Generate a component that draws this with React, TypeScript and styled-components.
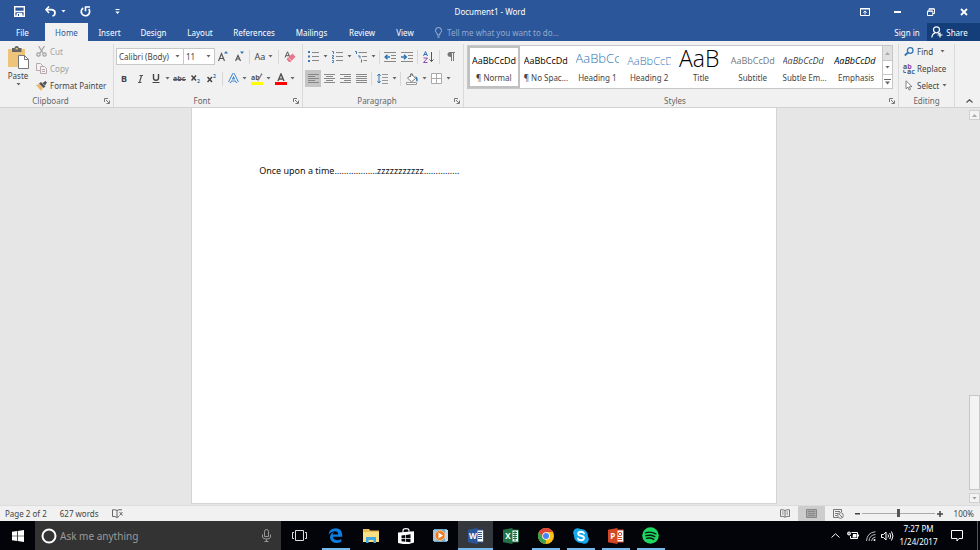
import React from "react";
import styled, { createGlobalStyle, css } from "styled-components";

const GlobalStyle = createGlobalStyle`
  * { box-sizing: border-box; }
  body { margin: 0; overflow: hidden; background: #e6e6e6; }
  body, button, input, select { font-family: "Noto Sans", "Open Sans", sans-serif; font-size: 8px; }
  button, input, select { margin: 0; padding: 0; border: 0; background: none; color: inherit; outline: none; }
  svg { display: block; flex: none; }
`;

const BLUE = "#2b579a";

const Screen = styled.div`
  height: 100vh;
  display: flex;
  flex-direction: column;
  color: #444;
  line-height: 12px;
`;

/* Title bar */
const TitleBar = styled.header`
  height: 23px;
  flex: none;
  display: grid;
  grid-template-columns: 1fr auto 1fr;
  align-items: center;
  background: ${BLUE};
  color: #fff;
`;
const QuickAccess = styled.div`
  display: flex;
  align-items: center;
  padding-left: 9px;
`;
const BarButton = styled.button<{ $w: number }>`
  width: ${(p) => p.$w}px;
  height: 22px;
  display: flex;
  align-items: center;
  justify-content: center;
  gap: 5px;
`;
const DocTitle = styled.h1`
  margin: 0;
  font-size: 8px;
  font-weight: 400;
`;
const WindowButtons = styled.div`
  display: flex;
  justify-content: flex-end;
`;

/* Tabs */
const TabRow = styled.nav`
  height: 18px;
  flex: none;
  display: flex;
  align-items: stretch;
  background: ${BLUE};
  color: #fff;
`;
const Tab = styled.button<{ $w: number; $active?: boolean }>`
  width: ${(p) => p.$w}px;
  ${(p) =>
    p.$active &&
    css`
      background: #f1f1f1;
      color: ${BLUE};
    `}
`;
const TellMe = styled.label`
  flex: 1;
  display: flex;
  align-items: center;
  gap: 5px;
  padding-left: 10px;
  color: #a9bcd9;
`;
const TellInput = styled.input`
  width: 160px;
  &::placeholder { color: #92a9cf; opacity: 1; }
`;
const SignIn = styled.button`
  width: 40px;
`;
const Share = styled.button`
  width: 53px;
  display: flex;
  align-items: center;
  justify-content: center;
  gap: 3px;
  background: #133e7a;
  padding-right: 8px;
`;

/* Ribbon */
const Ribbon = styled.div`
  height: 67px;
  flex: none;
  display: flex;
  background: #f1f1f1;
  border-bottom: 1px solid #d2d2d2;
  padding: 3px 0 0;
`;
const Group = styled.section<{ $w?: number }>`
  ${(p) => (p.$w ? `width: ${p.$w}px; flex: none;` : "flex: 1; min-width: 0;")}
  display: flex;
  flex-direction: column;
  border-right: 1px solid #dadada;
`;
const GroupBody = styled.div`
  flex: 1;
  display: flex;
  min-height: 0;
`;
const GroupFoot = styled.footer`
  height: 12px;
  display: flex;
  align-items: center;
  text-align: center;
  color: #666;
`;
const Launcher = styled.button`
  width: 12px;
  height: 12px;
  display: flex;
  align-items: center;
  justify-content: center;
`;
const FootLabel = styled.span`
  flex: 1;
`;
const PasteButton = styled.button`
  width: 36px;
  display: flex;
  flex-direction: column;
  align-items: center;
  padding-top: 2px;
  gap: 1px;
  line-height: 12px;
`;
const Stack = styled.div`
  display: flex;
  flex-direction: column;
  align-items: flex-start;
  line-height: 14px;
`;
const TextButton = styled.button<{ $disabled?: boolean }>`
  height: 17px;
  display: flex;
  align-items: center;
  gap: 3px;
  padding-bottom: 2px;
  white-space: nowrap;
  color: ${(p) => (p.$disabled ? "#a0a0a0" : "#444")};
`;
const IconSlot = styled.span`
  width: 11px;
  display: flex;
  justify-content: center;
`;
const Rows = styled.div`
  display: flex;
  flex-direction: column;
  padding: 4px 0 0 2px;
  gap: 5px;
`;
const Row = styled.div`
  height: 17px;
  display: flex;
  align-items: center;
`;
const Tool = styled.button<{ $w?: number; $active?: boolean }>`
  width: ${(p) => p.$w ?? 16}px;
  height: 17px;
  flex: none;
  display: flex;
  align-items: center;
  justify-content: center;
  gap: 3px;
  font-size: 9px;
  background: ${(p) => (p.$active ? "#c5c5c5" : "none")};
`;
const Divider = styled.span`
  width: 1px;
  height: 14px;
  margin: 0 2px;
  background: #d8d8d8;
`;
const Combo = styled.span<{ $w: number }>`
  width: ${(p) => p.$w}px;
  height: 17px;
  display: flex;
  align-items: center;
  background: #fff;
  border: 1px solid #c8c8c8;
  padding-right: 3px;
  & + & { margin-left: -1px; }
`;
const ComboSelect = styled.select`
  flex: 1;
  min-width: 0;
  appearance: none;
  padding-left: 2px;
  color: #444;
`;

/* Styles gallery */
const Gallery = styled.div`
  flex: 1;
  min-width: 0;
  height: 44px;
  margin: 1px 5px 0 3px;
  display: flex;
  background: #fff;
  border: 1px solid #c6c6c6;
`;
const StyleList = styled.div`
  flex: 1;
  min-width: 0;
  display: grid;
  grid-template-columns: repeat(8, minmax(0, 1fr));
`;
const StyleCard = styled.button<{ $active?: boolean }>`
  display: flex;
  flex-direction: column;
  padding: 0 2px;
  overflow: hidden;
  border: 2px solid ${(p) => (p.$active ? "#c0c0c0" : "transparent")};
  white-space: nowrap;
`;
const Sample = styled.span<{ $size: number; $color: string; $italic?: boolean; $light?: boolean }>`
  width: 100%;
  height: 23px;
  overflow: hidden;
  text-align: left;
  line-height: ${(p) => (p.$size > 12 ? 21 : 26)}px;
  font-family: "Open Sans", "Noto Sans", sans-serif;
  font-size: ${(p) => p.$size}px;
  font-weight: ${(p) => (p.$light ? 300 : 400)};
  font-style: ${(p) => (p.$italic ? "italic" : "normal")};
  color: ${(p) => p.$color};
`;
const StyleName = styled.span`
  width: 100%;
  text-align: center;
  line-height: 14px;
`;
const GalleryNav = styled.div`
  width: 10px;
  display: grid;
  grid-template-rows: 1fr 1fr 1fr;
  border-left: 1px solid #c6c6c6;
`;
const NavButton = styled.button<{ $dim?: boolean }>`
  display: flex;
  align-items: center;
  justify-content: center;
  background: ${(p) => (p.$dim ? "#e1e1e1" : "#fff")};
  & + & { border-top: 1px solid #c6c6c6; }
`;
const Collapse = styled.button`
  width: 25px;
  display: flex;
  align-items: flex-end;
  justify-content: center;
  padding: 0 0 4px 4px;
`;

/* Document */
const Workspace = styled.main`
  flex: 1;
  min-height: 0;
  display: flex;
  background: #e6e6e6;
`;
const Canvas = styled.div`
  flex: 1;
  display: flex;
  justify-content: center;
  padding-bottom: 1px;
`;
const Page = styled.article`
  width: 60.5%;
  background: #fff;
  border: 1px solid #d4d4d4;
  border-top: 0;
  padding: 56px 67px;
`;
const Paragraph = styled.p`
  margin: 0;
  font-size: 9px;
  line-height: 14px;
  color: #111;
`;
const ScrollBar = styled.div`
  width: 12px;
  display: flex;
  flex-direction: column;
  gap: 3px;
  padding: 2px 0 2px 1px;
`;
const ScrollButton = styled.button`
  height: 10px;
  display: flex;
  align-items: center;
  justify-content: center;
  background: #f3f3f3;
  border: 1px solid #d0d0d0;
`;
const ScrollTrack = styled.div`
  flex: 1;
  display: flex;
  flex-direction: column;
  justify-content: flex-end;
`;
const ScrollThumb = styled.div`
  height: 26%;
  background: #f3f3f3;
  border: 1px solid #c6c6c6;
`;

/* Status bar */
const StatusBar = styled.footer`
  height: 16px;
  flex: none;
  display: flex;
  align-items: center;
  background: #f1f1f1;
  border-top: 1px solid #dcdcdc;
  padding: 0 6px 0 5px;
`;
const StatusText = styled.span`
  margin-right: 13px;
`;
const Spacer = styled.span`
  flex: 1;
`;
const ViewButton = styled.button<{ $active?: boolean }>`
  width: 27px;
  height: 15px;
  display: flex;
  align-items: center;
  justify-content: center;
  background: ${(p) => (p.$active ? "#cdcdcd" : "none")};
`;
const ZoomStep = styled.button`
  width: 10px;
  height: 14px;
  display: flex;
  align-items: center;
  justify-content: center;
`;
const ZoomRange = styled.input`
  width: 73px;
  height: 10px;
  appearance: none;
  &::-webkit-slider-runnable-track { height: 1px; background: #aaa; }
  &::-webkit-slider-thumb { appearance: none; width: 3px; height: 8px; margin-top: -4px; background: #555; }
`;
const ZoomValue = styled.span`
  width: 29px;
  text-align: right;
`;

/* Taskbar */
const Taskbar = styled.footer`
  height: 29px;
  flex: none;
  display: flex;
  background: #02040a;
  color: #fff;
`;
const TaskButton = styled.button<{ $w?: number; $state?: "open" | "active" }>`
  width: ${(p) => p.$w ?? 35}px;
  display: flex;
  align-items: center;
  justify-content: center;
  background-color: ${(p) => (p.$state === "active" ? "#34383d" : "transparent")};
  ${(p) =>
    p.$state &&
    css`
      background-image: linear-gradient(#76b9ed, #76b9ed);
      background-repeat: no-repeat;
      background-position: center bottom;
      background-size: ${p.$state === "active" ? "100%" : "28px"} 2px;
    `}
`;
const Search = styled.label`
  width: 246px;
  display: flex;
  align-items: center;
  gap: 3px;
  padding: 0 10px 0 6px;
  background: #333;
`;
const SearchInput = styled.input`
  flex: 1;
  min-width: 0;
  font-size: 10px;
  &::placeholder { color: #9a9a9a; opacity: 1; }
`;
const Clock = styled.time`
  width: 47px;
  text-align: center;
  line-height: 13px;
  padding-top: 1px;
`;
const DesktopEdge = styled.button`
  width: 3px;
  margin-left: 5px;
  border-left: 1px solid #555;
`;

const Arrow = ({ color = "#666" }: { color?: string }) => (
  <svg width="5" height="3" viewBox="0 0 5 3"><path d="M.5 0h4L2.5 2.6z" fill={color} /></svg>
);
const ArrowButton = ({ label }: { label: string }) => (
  <Tool $w={7} aria-label={label}><Arrow /></Tool>
);
const UpArrow = ({ color = "#aaa" }: { color?: string }) => (
  <svg width="5" height="3" viewBox="0 0 5 3"><path d="M0 3h5L2.5 0z" fill={color} /></svg>
);
const Lines = ({ rows }: { rows: [number, number][] }) => (
  <svg width="11" height="9" viewBox="0 0 11 9" stroke="#888">
    {rows.map(([a, b], i) => <path key={i} d={`M${a} ${i * 2 + 0.5}H${b}`} />)}
  </svg>
);
const Foot = ({ children, launcher = true }: { children: React.ReactNode; launcher?: boolean }) => (
  <GroupFoot>
    <FootLabel>{children}</FootLabel>
    {launcher && (
      <Launcher aria-label={`${children} settings`}>
        <svg width="6" height="6" viewBox="0 0 6 6" fill="none" stroke="#777"><path d="M.5 4V.5H4M2 2l3 3M5.5 2.5v3h-3" /></svg>
      </Launcher>
    )}
  </GroupFoot>
);

const SCRIPT_TEXT = { fontFamily: "Open Sans", fontWeight: 700 } as const;

const ClipboardGroup = () => (
  <Group $w={114}>
    <GroupBody>
      <PasteButton>
        <svg width="22" height="23" viewBox="0 0 22 23">
          <path d="M1 3h17v18H1z" fill="#edc47a" />
          <path d="M5 2h2.500q0-2 2.200-2t2.200 2H14.500v4H5z" fill="#666" />
          <path d="M8.600 2h2.200v1.500H8.600z" fill="#edc47a" />
          <path d="M11.500 9.500h6l4 4v9h-10z" fill="#fff" stroke="#777" />
          <path d="M17.500 9.500v4h4" fill="none" stroke="#777" />
        </svg>
        Paste
        <Arrow />
      </PasteButton>
      <Stack>
        <TextButton $disabled>
          <IconSlot><svg width="11" height="11" viewBox="0 0 11 11" fill="none" stroke="#a0a0a0" strokeWidth="1.200"><path d="M2.500 0l4.500 7M8.500 0L4 7" /><circle cx="2.500" cy="8.500" r="1.700" /><circle cx="8.500" cy="8.500" r="1.700" /></svg></IconSlot>
          Cut
        </TextButton>
        <TextButton $disabled>
          <IconSlot><svg width="11" height="11" viewBox="0 0 11 11" fill="#f6f2f4" stroke="#b5a9b0"><path d="M.5.5h4l2 2v5h-6z" /><path d="M4.500 3.500h4l2 2v5h-6zM6 6.500h3M6 8.500h3" /></svg></IconSlot>
          Copy
        </TextButton>
        <TextButton>
          <IconSlot><svg width="11" height="10" viewBox="0 0 11 10"><path d="M0 4l3-1 4 4-2 3z" fill="#edb768" /><path d="M3 2.500l2-1.500 4.500 4.500-2 1.500zM6.500 2L9.500 0 11 1.500 9 4.500z" fill="#555" /></svg></IconSlot>
          Format Painter
        </TextButton>
      </Stack>
    </GroupBody>
    <Foot>Clipboard</Foot>
  </Group>
);

const FontGroup = () => (
  <Group $w={189}>
    <GroupBody>
      <Rows>
        <Row>
          <Combo $w={68}>
            <ComboSelect aria-label="Font" defaultValue="Calibri (Body)"><option>Calibri (Body)</option></ComboSelect>
            <Arrow />
          </Combo>
          <Combo $w={32}>
            <ComboSelect aria-label="Font size" defaultValue="11"><option>11</option></ComboSelect>
            <Arrow />
          </Combo>
          <Tool aria-label="Grow font">
            <svg width="10" height="11" viewBox="0 0 10 11"><path d="M.5 10L3.500 2.500 6.500 10M1.500 7.500h4" fill="none" stroke="#555" strokeWidth="1.200" /><path d="M6 2.500h4L8 0z" fill="#2e75b6" /></svg>
          </Tool>
          <Tool aria-label="Shrink font">
            <svg width="9" height="11" viewBox="0 0 9 11"><path d="M.5 10L3 4.500 5.500 10M1.500 8h3" fill="none" stroke="#555" strokeWidth="1.200" /><path d="M5 .5h4L7 3z" fill="#2e75b6" /></svg>
          </Tool>
          <Divider />
          <Tool $w={24} aria-label="Change case">Aa<Arrow /></Tool>
          <Divider />
          <Tool $w={18} aria-label="Clear formatting">
            <svg width="12" height="12" viewBox="0 0 12 12"><path d="M1 6.500L3.500.8 6 6.500M2 4.700h3" fill="none" stroke="#555" /><path d="M2.500 8L8.500 2.500l3 3.200L6.500 11H4.800z" fill="#e8798d" /><path d="M4.300 6.500l3.200 3.300" stroke="#f7c5cd" /></svg>
          </Tool>
        </Row>
        <Row>
          <Tool aria-label="Bold"><b>B</b></Tool>
          <Tool aria-label="Italic"><svg width="7" height="8" viewBox="0 0 7 8" fill="none" stroke="#555"><path d="M2.500.5H6M1 7.500h3.500M4.500.5l-2 7" strokeWidth="1.200" /></svg></Tool>
          <Tool aria-label="Underline"><svg width="8" height="9" viewBox="0 0 8 9" fill="none" stroke="#444"><path d="M1.500 0v4q0 2.300 2.500 2.300t2.500-2.300V0" strokeWidth="1.400" /><path d="M.5 8.500h7" /></svg></Tool>
          <ArrowButton label="Underline styles" />
          <Tool $w={17} aria-label="Strikethrough">
            <svg width="13" height="9" viewBox="0 0 13 9"><text x="0" y="7" fontSize="7" fill="#555" style={SCRIPT_TEXT}>abc</text><path d="M0 5.500h13" stroke="#555" /></svg>
          </Tool>
          <Tool aria-label="Subscript">
            <svg width="10" height="9" viewBox="0 0 10 9"><path d="M.5 1.500l4.500 5M5 1.500l-4.500 5" stroke="#444" strokeWidth="1.500" /><text x="6" y="9" fontSize="5" fill="#2e75b6" style={SCRIPT_TEXT}>2</text></svg>
          </Tool>
          <Tool aria-label="Superscript">
            <svg width="10" height="10" viewBox="0 0 10 10"><path d="M.5 3l4.500 5M5 3L.5 8" stroke="#444" strokeWidth="1.500" /><text x="6" y="4" fontSize="5" fill="#2e75b6" style={SCRIPT_TEXT}>2</text></svg>
          </Tool>
          <Divider />
          <Tool aria-label="Text effects">
            <svg width="11" height="11" viewBox="0 0 11 11" fill="none"><path d="M1.500 9.500L5.500 1.500l4 8M3 7h5" stroke="#3f84c8" strokeWidth="3" strokeLinejoin="round" /><path d="M1.500 9.500L5.500 1.500l4 8M3 7h5" stroke="#fff" strokeWidth="1.200" /></svg>
          </Tool>
          <ArrowButton label="Text effect options" />
          <Tool $w={17} aria-label="Highlight">
            <svg width="12" height="12" viewBox="0 0 12 12"><text x="0" y="7" fontSize="7" fill="#555" style={SCRIPT_TEXT}>ab</text><path d="M11.500 1L7.500 7.500l-1 .8.300-1.500L10.500 0z" fill="#777" /><path d="M0 9h12v3H0z" fill="#ff0" /></svg>
          </Tool>
          <ArrowButton label="Highlight colors" />
          <Tool $w={17} aria-label="Font color">
            <svg width="12" height="12" viewBox="0 0 12 12"><path d="M3 8L6 1l3 7M4 6h4" fill="none" stroke="#555" strokeWidth="1.500" /><path d="M0 9h12v3H0z" fill="#f00" /></svg>
          </Tool>
          <ArrowButton label="Font colors" />
        </Row>
      </Rows>
    </GroupBody>
    <Foot>Font</Foot>
  </Group>
);

const ParagraphGroup = () => (
  <Group $w={161}>
    <GroupBody>
      <Rows>
        <Row>
          <Tool $w={17} aria-label="Bullets">
            <svg width="11" height="11" viewBox="0 0 11 11"><path d="M0 0h2v2H0zM0 4.500h2v2H0zM0 9h2v2H0z" fill="#3877b5" /><path d="M4 1.500h7M4 5.500h7M4 9.500h7" stroke="#888" /></svg>
          </Tool>
          <ArrowButton label="Bullet library" />
          <Tool $w={17} aria-label="Numbering">
            <svg width="11" height="12" viewBox="0 0 11 12"><path d="M0 .5h1.500V3M0 4.500h1.500v1.500H.5v1.500H2M0 9.500h1.500v2H0" fill="none" stroke="#3877b5" strokeWidth=".9" /><path d="M4 1.500h7M4 5.500h7M4 9.500h7" stroke="#888" /></svg>
          </Tool>
          <ArrowButton label="Number formats" />
          <Tool $w={17} aria-label="Multilevel list">
            <svg width="13" height="12" viewBox="0 0 13 12"><path d="M0 .5h1.500V3M3 5h2v2.500M6.500 8.500v3" fill="none" stroke="#3877b5" /><path d="M3.500 1.500H12M7 5.500h5M8.500 9.500H12" stroke="#888" /></svg>
          </Tool>
          <ArrowButton label="List levels" />
          <Divider />
          <Tool $w={17} aria-label="Decrease indent">
            <svg width="13" height="10" viewBox="0 0 13 10"><path d="M0 .5h12M7 3.500h5M7 6.500h5M0 9.500h12" stroke="#888" /><path d="M6 5H1.500M3.500 2.800L1.200 5l2.300 2.200" fill="none" stroke="#2e75b6" strokeWidth="1.500" /></svg>
          </Tool>
          <Tool $w={16} aria-label="Increase indent">
            <svg width="13" height="10" viewBox="0 0 13 10"><path d="M0 .5h12M7 3.500h5M7 6.500h5M0 9.500h12" stroke="#888" /><path d="M0 5h5M3 2.800L5.300 5 3 7.200" fill="none" stroke="#2e75b6" strokeWidth="1.500" /></svg>
          </Tool>
          <Divider />
          <Tool $w={17} aria-label="Sort">
            <svg width="11" height="12" viewBox="0 0 11 12" fill="none"><path d="M.5 5L2.500.5l2 4.500M1 3.500h3" stroke="#2e75b6" /><path d="M.5 7h4l-4 4.500h4" stroke="#8a4bab" /><path d="M8.500 1v9.500M6.500 8.500l2 2 2-2" stroke="#555" /></svg>
          </Tool>
          <Divider />
          <Tool $w={18} aria-label="Show marks">
            <svg width="8" height="9" viewBox="0 0 8 9"><path d="M3 0h5v1H7v8H6V1H5v8H4V5Q.5 5 .5 2.500T3 0z" fill="#777" /></svg>
          </Tool>
        </Row>
        <Row>
          <Tool $active aria-label="Align left"><Lines rows={[[0, 11], [0, 7], [0, 11], [0, 7], [0, 11]]} /></Tool>
          <Tool aria-label="Center"><Lines rows={[[0, 11], [2, 9], [0, 11], [2, 9], [0, 11]]} /></Tool>
          <Tool aria-label="Align right"><Lines rows={[[0, 11], [4, 11], [0, 11], [4, 11], [0, 11]]} /></Tool>
          <Tool aria-label="Justify"><Lines rows={[[0, 11], [0, 11], [0, 11], [0, 11], [0, 11]]} /></Tool>
          <Divider />
          <Tool $w={17} aria-label="Line spacing">
            <svg width="11" height="11" viewBox="0 0 11 11" fill="none"><path d="M2 1v9M.3 2.800L2 1l1.700 1.800M.3 8.200L2 10l1.700-1.800" stroke="#2e75b6" /><path d="M5 1.500h6M5 4.500h6M5 7.500h6M5 10.500h6" stroke="#999" /></svg>
          </Tool>
          <ArrowButton label="Line spacing options" />
          <Divider />
          <Tool $w={18} aria-label="Shading">
            <svg width="13" height="12" viewBox="0 0 13 12"><path d="M1.500 5L6 1.500 9.500 5.500 5.500 8.800z" fill="#fff" stroke="#777" /><path d="M4.500 4V1q1-1 2 0v2" fill="none" stroke="#777" /><path d="M9 3.500q3.500 0 2.500 5-2-.5-1.500-3z" fill="#3877b5" /><path d="M.5 9.500h10v2H.5z" fill="#fff" stroke="#999" /></svg>
          </Tool>
          <ArrowButton label="Shading colors" />
          <Tool $w={17} aria-label="Borders">
            <svg width="11" height="11" viewBox="0 0 11 11" fill="#fff" stroke="#aaa"><path d="M1 .5h9.500v10H.5V.5zM5.500 0v11M0 5.500h11" /></svg>
          </Tool>
          <ArrowButton label="Border options" />
        </Row>
      </Rows>
    </GroupBody>
    <Foot>Paragraph</Foot>
  </Group>
);

const STYLES = [
  { name: "¶ Normal", text: "AaBbCcDd", size: 9, color: "#000", active: true },
  { name: "¶ No Spac...", text: "AaBbCcDd", size: 9, color: "#000" },
  { name: "Heading 1", text: "AaBbCc", size: 13, color: "#2e74b5", light: true },
  { name: "Heading 2", text: "AaBbCcD", size: 11, color: "#2e74b5", light: true },
  { name: "Title", text: "AaB", size: 23, color: "#000", light: true },
  { name: "Subtitle", text: "AaBbCcDd", size: 9, color: "#777" },
  { name: "Subtle Em...", text: "AaBbCcDd", size: 9, color: "#404040", italic: true },
  { name: "Emphasis", text: "AaBbCcDd", size: 9, color: "#000", italic: true },
];

const StylesGroup = () => (
  <Group>
    <GroupBody>
      <Gallery>
        <StyleList>
          {STYLES.map((s) => (
            <StyleCard key={s.name} $active={s.active}>
              <Sample $size={s.size} $color={s.color} $italic={s.italic} $light={s.light}>{s.text}</Sample>
              <StyleName>{s.name}</StyleName>
            </StyleCard>
          ))}
        </StyleList>
        <GalleryNav>
          <NavButton $dim aria-label="Previous styles"><UpArrow /></NavButton>
          <NavButton aria-label="Next styles"><Arrow /></NavButton>
          <NavButton aria-label="More styles">
            <svg width="7" height="6" viewBox="0 0 7 6"><path d="M0 .5h7" stroke="#666" /><path d="M1 2.500h5L3.500 5.500z" fill="#666" /></svg>
          </NavButton>
        </GalleryNav>
      </Gallery>
    </GroupBody>
    <Foot>Styles</Foot>
  </Group>
);

const EditStack = styled(Stack)`
  padding-left: 4px;
`;
const ArrowSlot = styled.span`
  padding-left: 4px;
`;

const EditingGroup = () => (
  <Group $w={56}>
    <GroupBody>
      <EditStack>
        <TextButton>
          <IconSlot><svg width="10" height="9" viewBox="0 0 10 9" fill="none" stroke="#2e75b6"><circle cx="6.200" cy="3.500" r="2.800" strokeWidth="1.300" /><path d="M4 5.500L.8 8.500" strokeWidth="1.800" /></svg></IconSlot>
          Find
          <ArrowSlot><Arrow /></ArrowSlot>
        </TextButton>
        <TextButton>
          <IconSlot>
            <svg width="12" height="12" viewBox="0 0 12 12"><text x="0" y="6" fontSize="7" fill="#555" style={SCRIPT_TEXT}>a<tspan fill="#8a4bab">b</tspan></text><text x="4" y="11" fontSize="7" fill="#555" style={SCRIPT_TEXT}>a<tspan fill="#2e75b6">c</tspan></text><path d="M.8 7v2.500H3" fill="none" stroke="#2e75b6" /></svg>
          </IconSlot>
          Replace
        </TextButton>
        <TextButton>
          <IconSlot><svg width="8" height="11" viewBox="0 0 8 11"><path d="M1 .8v8l2-1.700 1.200 3 1.300-.6L4.300 6.700H7z" fill="#fff" stroke="#777" strokeWidth=".9" /></svg></IconSlot>
          Select
          <Arrow />
        </TextButton>
      </EditStack>
    </GroupBody>
    <Foot launcher={false}>Editing</Foot>
  </Group>
);

const TABS: [string, number][] = [
  ["File", 45], ["Home", 43], ["Insert", 43], ["Design", 45], ["Layout", 48], ["References", 60],
  ["Mailings", 55], ["Review", 46], ["View", 40],
];

const OfficeIcon = ({ color, letter, sheet }: { color: string; letter: string; sheet: React.ReactNode }) => (
  <svg width="16" height="16" viewBox="0 0 16 16">
    <path d="M8 2h7.500v12H8z" fill="#fff" stroke={color} />
    {sheet}
    <path d="M0 1.800L9.500 0v16L0 14.200z" fill={color} />
    <text x="4.800" y="11" textAnchor="middle" fontSize="8" fill="#fff" style={SCRIPT_TEXT}>{letter}</text>
  </svg>
);

export default function App() {
  return (
    <Screen>
      <GlobalStyle />
      <TitleBar>
        <QuickAccess>
          <BarButton $w={20} aria-label="Save">
            <svg width="11" height="11" viewBox="0 0 11 11" fill="none" stroke="#fff"><path d="M.7.7h9.600v9.600H.7z" strokeWidth="1.400" /><path d="M1 5.500h9" strokeWidth="1.500" /><path d="M3 7.500h5V10H3z" fill="#fff" /><path d="M4.500 8v2" stroke={BLUE} /></svg>
          </BarButton>
          <BarButton $w={52} aria-label="Undo">
            <svg width="11" height="11" viewBox="0 0 11 11" fill="none" stroke="#fff"><path d="M4 .5L1 3.700 4 7" strokeWidth="1.600" /><path d="M1 3.700h5.500q3.500.3 3.500 3T7.500 10" strokeWidth="1.700" /></svg>
            <Arrow color="#fff" />
          </BarButton>
          <BarButton $w={8} aria-label="Repeat">
            <svg width="11" height="11" viewBox="0 0 11 11" fill="none" stroke="#fff"><path d="M3.200 2A4.200 4.200 0 1 0 8.800 3" strokeWidth="1.700" /><path d="M5.500 5.300V1H10" strokeWidth="1.600" /></svg>
          </BarButton>
          <BarButton $w={56} aria-label="Customize toolbar">
            <svg width="5" height="6" viewBox="0 0 5 6"><path d="M.5.5h4" stroke="#fff" /><path d="M.3 2.500h4.400L2.500 5z" fill="#fff" /></svg>
          </BarButton>
        </QuickAccess>
        <DocTitle>Document1 - Word</DocTitle>
        <WindowButtons>
          <BarButton $w={33} aria-label="Ribbon display options">
            <svg width="10" height="8" viewBox="0 0 10 8" fill="none" stroke="#fff"><path d="M.5.5h9v7h-9zM0 1h10" /><path d="M5 6.500V3M3.300 4.500L5 3l1.700 1.500" /></svg>
          </BarButton>
          <BarButton $w={33} aria-label="Minimize"><svg width="7" height="2" viewBox="0 0 7 2"><path d="M0 0h7v2H0z" fill="#fff" /></svg></BarButton>
          <BarButton $w={33} aria-label="Restore"><svg width="8" height="8" viewBox="0 0 8 8" fill="none" stroke="#fff"><path d="M2 2V.8h5.500V5.500H6M2 1h5" /><path d="M.5 3.200h5.300v4.300H.5zM.5 3h5" /></svg></BarButton>
          <BarButton $w={33} aria-label="Close"><svg width="8" height="8" viewBox="0 0 8 8" stroke="#fff" strokeWidth="1.800"><path d="M1 1l6 6M7 1L1 7" /></svg></BarButton>
        </WindowButtons>
      </TitleBar>

      <TabRow>
        {TABS.map(([name, w]) => (
          <Tab key={name} $w={w} $active={name === "Home"}>{name}</Tab>
        ))}
        <TellMe>
          <svg width="7" height="11" viewBox="0 0 7 11" fill="none" stroke="currentColor"><path d="M2.300 8q0-1.500-.8-2.200Q.5 4.800.5 3.500q0-3 3-3t3 3q0 1.300-1 2.300-.8.700-.8 2.200zM2.300 10h2.400" /></svg>
          <TellInput aria-label="Tell me what you want to do" placeholder="Tell me what you want to do..." />
        </TellMe>
        <SignIn>Sign in</SignIn>
        <Share>
          <svg width="12" height="12" viewBox="0 0 12 12" fill="none" stroke="#fff" strokeWidth="1.200"><circle cx="5.500" cy="3.800" r="3" /><path d="M.8 11.500q.5-4 3.500-4.700M6.800 6.800l1.500 1M9 6.500v5M6.500 9h5" /></svg>
          Share
        </Share>
      </TabRow>

      <Ribbon>
        <ClipboardGroup />
        <FontGroup />
        <ParagraphGroup />
        <StylesGroup />
        <EditingGroup />
        <Collapse aria-label="Collapse ribbon">
          <svg width="7" height="4" viewBox="0 0 7 4" fill="none" stroke="#555" strokeWidth="1.300"><path d="M.5 3.500l3-2.700 3 2.700" /></svg>
        </Collapse>
      </Ribbon>

      <Workspace>
        <Canvas>
          <Page>
            <Paragraph>Once upon a time………………zzzzzzzzzzz……………</Paragraph>
          </Page>
        </Canvas>
        <ScrollBar>
          <ScrollButton aria-label="Scroll up"><UpArrow /></ScrollButton>
          <ScrollTrack><ScrollThumb /></ScrollTrack>
          <ScrollButton aria-label="Scroll down"><Arrow color="#999" /></ScrollButton>
        </ScrollBar>
      </Workspace>

      <StatusBar>
        <StatusText>Page 2 of 2</StatusText>
        <StatusText>627 words</StatusText>
        <svg width="11" height="9" viewBox="0 0 11 9" fill="none" stroke="#666"><path d="M5 1.500Q3 .3.500.8v6.700q2.500-.5 4.500 1zM5 1.500Q6.500.3 10 .8M5 8.500q1-1 2-1M7.500 3l3 3.500M10.500 3l-3 3.500" /></svg>
        <Spacer />
        <ViewButton aria-label="Read mode">
          <svg width="10" height="9" viewBox="0 0 10 9" fill="none" stroke="#777"><path d="M5 1.500Q3 .3.500.8v6.700q2.500-.5 4.500.7 2-1.200 4.500-.7V.8Q7 .3 5 1.500zV8M2 3h1.500M2 5h1.500M6.500 3H8M6.500 5H8" /></svg>
        </ViewButton>
        <ViewButton $active aria-label="Print layout">
          <svg width="11" height="9" viewBox="0 0 11 9" fill="#aaa" stroke="#888"><path d="M.5.5h10v8H.5zM2 2.500h7M2 4.500h7M2 6.500h7" /></svg>
        </ViewButton>
        <ViewButton aria-label="Web layout">
          <svg width="11" height="10" viewBox="0 0 11 10" fill="none" stroke="#777"><path d="M5 8.500H.5v-8h8V3M2 2.500h5M2 4.500h3M2 6.500h2" /><circle cx="7.500" cy="6.500" r="2.800" /><path d="M6 5l3 3" /></svg>
        </ViewButton>
        <ZoomStep aria-label="Zoom out"><svg width="5" height="2" viewBox="0 0 5 2"><path d="M0 0h5v1.500H0z" fill="#444" /></svg></ZoomStep>
        <ZoomRange type="range" aria-label="Zoom" min="0" max="200" defaultValue="100" />
        <ZoomStep aria-label="Zoom in"><svg width="6" height="6" viewBox="0 0 6 6"><path d="M0 3h6M3 0v6" stroke="#444" strokeWidth="1.500" /></svg></ZoomStep>
        <ZoomValue>100%</ZoomValue>
      </StatusBar>

      <Taskbar>
        <TaskButton aria-label="Start">
          <svg width="12" height="12" viewBox="0 0 12 12" fill="#fff"><path d="M0 1.700l5-.7v4.700H0zM5.700.9L12 0v5.700H5.700zM0 6.300h5V11l-5-.7zM5.700 6.300H12V12l-6.300-.9z" /></svg>
        </TaskButton>
        <Search>
          <svg width="16" height="16" viewBox="0 0 16 16" fill="none" stroke="#fff" strokeWidth="2"><circle cx="8" cy="8" r="6.500" /></svg>
          <SearchInput aria-label="Search" placeholder="Ask me anything" />
          <svg width="9" height="13" viewBox="0 0 9 13" fill="none" stroke="#999"><path d="M4.500.5Q6.500.5 6.500 2.500v5h-4v-5Q2.500.5 4.500.5zM.5 5.500V8q0 2 4 2t4-2V5.500M4.500 10v2.500M2.500 12.500h4" /></svg>
        </Search>
        <TaskButton $w={37} aria-label="Task view">
          <svg width="15" height="12" viewBox="0 0 15 12" fill="none" stroke="#ddd"><path d="M3.500.5h8v10h-8zM2 2.500H.5v6H2M13 2.500h1.500v6H13" /></svg>
        </TaskButton>
        <TaskButton $state="open" aria-label="Edge">
          <svg width="15" height="15" viewBox="0 0 15 15"><path d="M.5 6.500Q1.500.3 7.800.3q6.200.3 6.400 6.700v1.800H5q.3 3.200 4 3.400 2.400 0 4.300-1.200v2.700Q11 15 8.300 15 2.800 14.700 2 9.500 2 5.500 6 4q-1.300 1.200-1.300 2.600h5.500Q10.200 3.200 7 3.200 3.200 3.300.5 6.500z" fill="#0e7fe0" /></svg>
        </TaskButton>
        <TaskButton aria-label="File Explorer">
          <svg width="16" height="14" viewBox="0 0 16 14"><path d="M0 0h6l1.200 1.500H16V12H0z" fill="#e8bd55" /><path d="M0 3h16v10H0z" fill="#fbdf83" /><path d="M3 14V8h10v6h-2.500v-3h-5v3z" fill="#43a9e2" /></svg>
        </TaskButton>
        <TaskButton aria-label="Store">
          <svg width="16" height="16" viewBox="0 0 16 16"><path d="M0 4.500l16-1.300v11.300L11 16H5L0 15z" fill="#fff" /><path d="M5 4V2.500Q5 .6 8 .6t3 1.900v1.200" fill="none" stroke="#fff" strokeWidth="1.100" /><path d="M3.500 7.500l3.800-.5v3H3.500zM8 6.900l4.500-.6V10H8zM3.500 10.700h3.800v3l-3.800-.5zM8 10.700h4.500v3.600L8 13.800z" fill="#05070c" /></svg>
        </TaskButton>
        <TaskButton aria-label="Media player">
          <svg width="15" height="13" viewBox="0 0 15 13"><path d="M1 0h13v13H1z" fill="#6fa7cb" /><path d="M0 1h4v11H0z" fill="#9fc5dc" /><path d="M12 1h3v11h-3z" fill="#c8d7df" /><circle cx="7" cy="6.500" r="5" fill="#ef7c23" stroke="#f8d4ac" strokeWidth=".8" /><path d="M5.500 3.500v6l4.500-3z" fill="#fff" /></svg>
        </TaskButton>
        <TaskButton $state="active" aria-label="Word">
          <OfficeIcon color="#2b579a" letter="W" sheet={<path d="M10 4.500h4M10 6.500h4M10 8.500h4M10 10.500h4" stroke="#2b579a" />} />
        </TaskButton>
        <TaskButton aria-label="Excel">
          <OfficeIcon color="#217346" letter="X" sheet={<path d="M10 4.500h4M10 6.500h4M10 8.500h4M10 10.500h4M12 3v10" stroke="#217346" />} />
        </TaskButton>
        <TaskButton $state="open" aria-label="Chrome">
          <svg width="16" height="16" viewBox="0 0 16 16"><circle cx="8" cy="8" r="8" fill="#fbc116" /><path d="M8 0A8 8 0 0 1 14.930 4H8L4.500 10 1.070 4A8 8 0 0 1 8 0z" fill="#e0453a" /><path d="M1.070 4L4.600 10 8 12l-.3 4A8 8 0 0 1 1.070 4z" fill="#34a152" /><circle cx="8" cy="8" r="3.800" fill="#fff" /><circle cx="8" cy="8" r="3" fill="#4486f4" /></svg>
        </TaskButton>
        <TaskButton $state="open" aria-label="Skype">
          <svg width="16" height="16" viewBox="0 0 16 16"><circle cx="8" cy="8" r="7" fill="#14a8ec" /><circle cx="4.700" cy="4.700" r="4.500" fill="#14a8ec" /><circle cx="11.300" cy="11.300" r="4.500" fill="#14a8ec" /><path d="M11 5.300Q10.200 3.700 8 3.700q-2.800.1-2.800 2Q5.200 7.300 8 7.800q3 .5 3 2.300 0 2.100-3 2.200-2.500 0-3.200-1.900" fill="none" stroke="#fff" strokeWidth="1.900" strokeLinecap="round" /></svg>
        </TaskButton>
        <TaskButton $state="open" aria-label="PowerPoint">
          <OfficeIcon color="#d24726" letter="P" sheet={<g stroke="#d24726"><circle cx="12" cy="6" r="1.700" fill="none" /><path d="M10 9.500h4M10 11.500h4" /></g>} />
        </TaskButton>
        <TaskButton $state="open" aria-label="Spotify">
          <svg width="17" height="17" viewBox="0 0 17 17"><circle cx="8.500" cy="8.500" r="8.300" fill="#1ed760" /><path d="M3.500 5.800q5.500-1.700 10.300 1M4 8.700q4.700-1.300 8.800.9M4.500 11.400q4-1 7.300.9" fill="none" stroke="#0b1a10" strokeWidth="1.400" strokeLinecap="round" /></svg>
        </TaskButton>
        <Spacer />
        <TaskButton $w={17} aria-label="Hidden icons">
          <svg width="9" height="5" viewBox="0 0 9 5" fill="none" stroke="#fff"><path d="M.5 4.500l4-3.700 4 3.700" /></svg>
        </TaskButton>
        <TaskButton $w={18} aria-label="Battery">
          <svg width="12" height="9" viewBox="0 0 12 9" fill="none" stroke="#fff"><path d="M4.500 1.500h6v6H3.500V5" /><path d="M6 3h3.500v3.500H5.500z" fill="#fff" stroke="none" /><path d="M11.500 3.500v2" /><circle cx="2" cy="2.500" r="1.500" fill="#999" /></svg>
        </TaskButton>
        <TaskButton $w={17} aria-label="Wi-Fi">
          <svg width="10" height="10" viewBox="0 0 10 10" fill="none" stroke="#bbb"><path d="M.5 10Q1 1.500 9.500.7M3 10q.5-6 6.500-6.500M5.500 10q.3-3.500 4-4" /><circle cx="8.500" cy="9" r="1" fill="#fff" stroke="none" /></svg>
        </TaskButton>
        <TaskButton $w={16} aria-label="Volume">
          <svg width="13" height="10" viewBox="0 0 13 10" fill="none" stroke="#fff"><path d="M.5 3.500H2.500L5 1v8L2.500 6.500h-2zM7 3.500q1 1.500 0 3M8.700 2q2 3 0 6M10.500.5q3 4.500 0 9" /></svg>
        </TaskButton>
        <Clock>7:27 PM<br />1/24/2017</Clock>
        <TaskButton $w={30} aria-label="Notifications">
          <svg width="12" height="12" viewBox="0 0 12 12" fill="none" stroke="#fff"><path d="M.5.500h11v8H8L6 11 6 8.500H.5z" /></svg>
        </TaskButton>
        <DesktopEdge aria-label="Show desktop" />
      </Taskbar>
    </Screen>
  );
}
